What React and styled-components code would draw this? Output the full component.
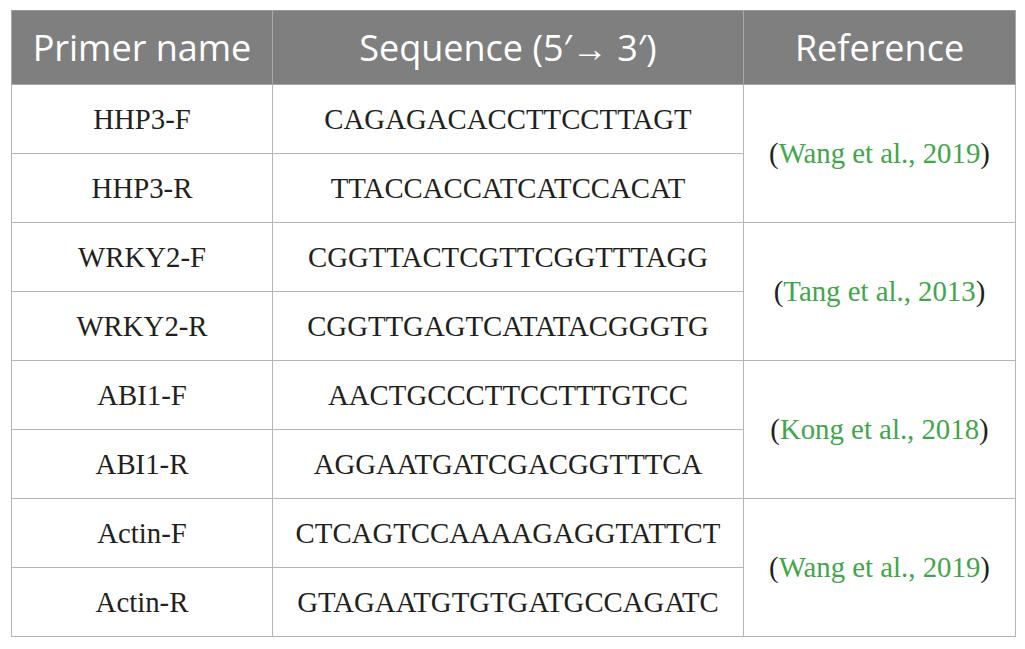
import React from "react";
import styled, { createGlobalStyle } from "styled-components";

const Global = createGlobalStyle`
  html, body { margin: 0; padding: 0; background: #ffffff; }
`;

const Page = styled.div`
  padding: 10px 10px 0 11px;
`;

const Table = styled.table`
  border-collapse: collapse;
  width: 1004px;
  table-layout: fixed;
`;

const HeadCell = styled.th`
  height: 73px;
  padding: 0;
  background: #7f7f7f;
  color: #ffffff;
  font-family: "Open Sans", sans-serif;
  font-weight: 400;
  font-size: 36px;
  text-align: center;
  vertical-align: middle;
  border: 1px solid #a9a9a9;
  border-top-color: #9a9a9a;
`;

const Cell = styled.td`
  height: 68px;
  padding: 0;
  font-family: "Liberation Serif", "Times New Roman", serif;
  font-size: 28.8px;
  color: #231f20;
  text-align: center;
  vertical-align: middle;
  border: 1px solid #b5b5b5;
`;

const Cite = styled.a`
  color: #3fa64a;
  text-decoration: none;
`;

const groups = [
  {
    rows: [
      ["HHP3-F", "CAGAGACACCTTCCTTAGT"],
      ["HHP3-R", "TTACCACCATCATCCACAT"],
    ],
    ref: "Wang et al., 2019",
  },
  {
    rows: [
      ["WRKY2-F", "CGGTTACTCGTTCGGTTTAGG"],
      ["WRKY2-R", "CGGTTGAGTCATATACGGGTG"],
    ],
    ref: "Tang et al., 2013",
  },
  {
    rows: [
      ["ABI1-F", "AACTGCCCTTCCTTTGTCC"],
      ["ABI1-R", "AGGAATGATCGACGGTTTCA"],
    ],
    ref: "Kong et al., 2018",
  },
  {
    rows: [
      ["Actin-F", "CTCAGTCCAAAAGAGGTATTCT"],
      ["Actin-R", "GTAGAATGTGTGATGCCAGATC"],
    ],
    ref: "Wang et al., 2019",
  },
];

export default function App() {
  return (
    <Page>
      <Global />
      <Table>
        <colgroup>
          <col style={{ width: 261 }} />
          <col style={{ width: 471 }} />
          <col style={{ width: 272 }} />
        </colgroup>
        <thead>
          <tr>
            <HeadCell>Primer name</HeadCell>
            <HeadCell>Sequence (5′→ 3′)</HeadCell>
            <HeadCell>Reference</HeadCell>
          </tr>
        </thead>
        <tbody>
          {groups.map((g, gi) =>
            g.rows.map((r, ri) => (
              <tr key={`${gi}-${ri}`}>
                <Cell>{r[0]}</Cell>
                <Cell>{r[1]}</Cell>
                {ri === 0 && (
                  <Cell rowSpan={2}>
                    (<Cite href="#">{g.ref}</Cite>)
                  </Cell>
                )}
              </tr>
            ))
          )}
        </tbody>
      </Table>
    </Page>
  );
}
